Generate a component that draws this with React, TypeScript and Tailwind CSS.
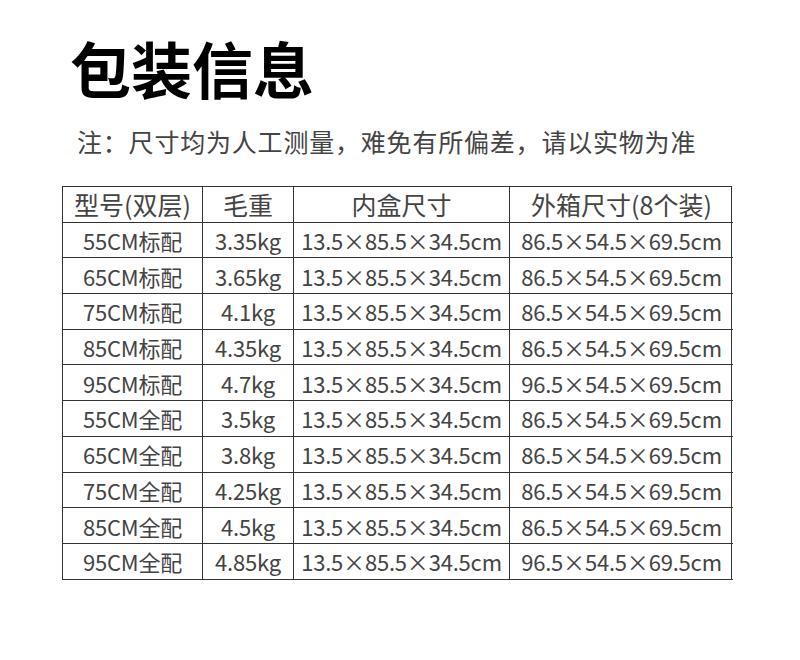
const rows: [string, string, string, string][] = [
  ["55CM标配", "3.35kg", "13.5×85.5×34.5cm", "86.5×54.5×69.5cm"],
  ["65CM标配", "3.65kg", "13.5×85.5×34.5cm", "86.5×54.5×69.5cm"],
  ["75CM标配", "4.1kg", "13.5×85.5×34.5cm", "86.5×54.5×69.5cm"],
  ["85CM标配", "4.35kg", "13.5×85.5×34.5cm", "86.5×54.5×69.5cm"],
  ["95CM标配", "4.7kg", "13.5×85.5×34.5cm", "96.5×54.5×69.5cm"],
  ["55CM全配", "3.5kg", "13.5×85.5×34.5cm", "86.5×54.5×69.5cm"],
  ["65CM全配", "3.8kg", "13.5×85.5×34.5cm", "86.5×54.5×69.5cm"],
  ["75CM全配", "4.25kg", "13.5×85.5×34.5cm", "86.5×54.5×69.5cm"],
  ["85CM全配", "4.5kg", "13.5×85.5×34.5cm", "86.5×54.5×69.5cm"],
  ["95CM全配", "4.85kg", "13.5×85.5×34.5cm", "96.5×54.5×69.5cm"],
];

const header = ["型号(双层)", "毛重", "内盒尺寸", "外箱尺寸(8个装)"];

function Row({ cells, head }: { cells: string[]; head?: boolean }) {
  return (
    <div className="grid grid-cols-[140px_91px_216px_223px] h-[35.7px]">
      {cells.map((c, i) => (
        <div
          key={i}
          className={
            "flex items-center justify-center border-[#333] border-b " +
            (i < 3 ? "border-r " : "") +
            (head ? "text-[25px]" : "text-[22px] tracking-[-0.2px]")
          }
        >
          {c}
        </div>
      ))}
    </div>
  );
}

export default function App() {
  return (
    <div
      className="w-[800px] h-[660px] bg-white pt-[35px]"
      style={{ fontFamily: '"Noto Sans CJK SC", "Noto Sans", sans-serif' }}
    >
      <h1 className="ml-[70px] text-[61px] leading-[66px] font-bold text-black">
        包装信息
      </h1>
      <p className="ml-[77px] mt-[25px] text-[25px] leading-[30px] tracking-[0.8px] text-[#444]">
        注：尺寸均为人工测量，难免有所偏差，请以实物为准
      </p>
      <div className="ml-[62px] mt-[30px] w-[670px] border-t border-l border-r border-[#333] text-[#444] leading-none">
        <Row cells={header} head />
        {rows.map((r, i) => (
          <Row key={i} cells={r} />
        ))}
      </div>
    </div>
  );
}
